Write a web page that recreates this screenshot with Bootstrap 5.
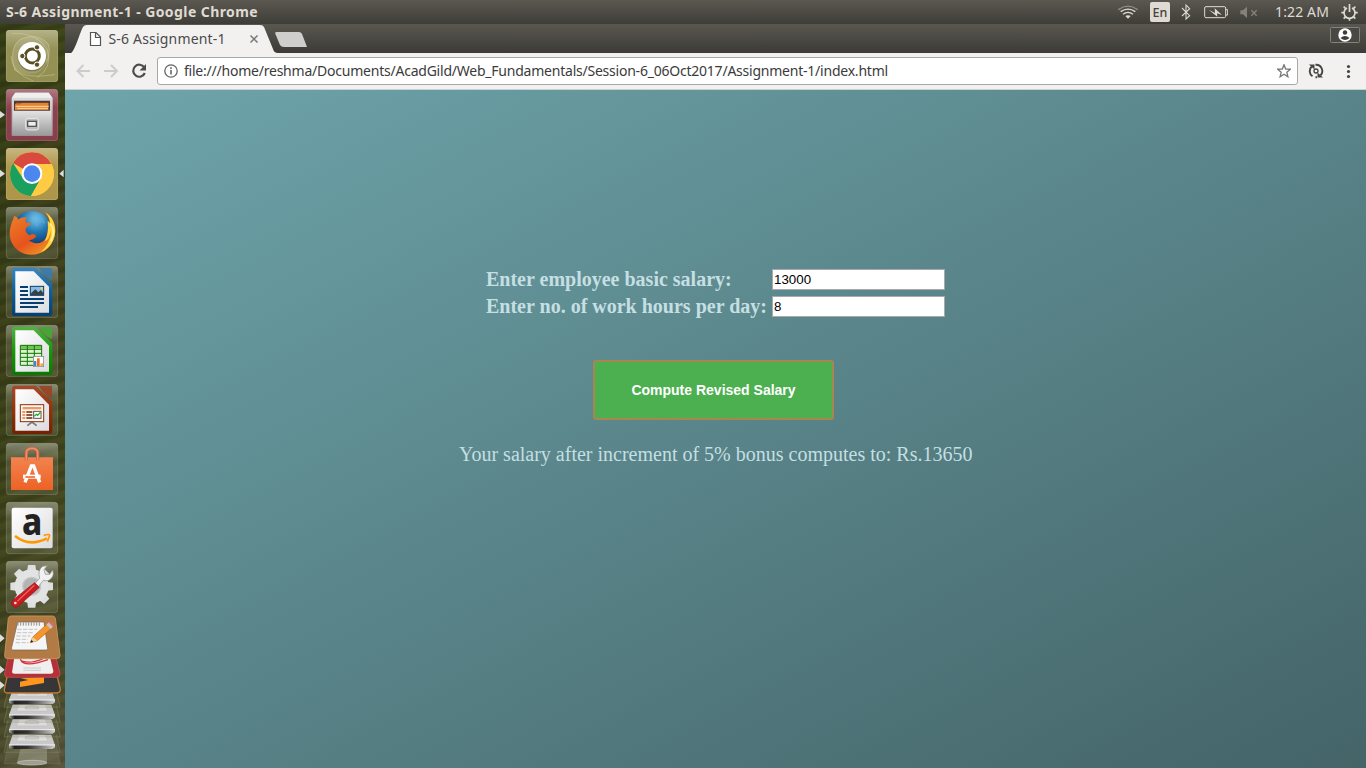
<!DOCTYPE html>
<html lang="en">
<head>
<meta charset="utf-8">
<title>S-6 Assignment-1</title>
<link href="https://cdn.jsdelivr.net/npm/bootstrap@5.3.0/dist/css/bootstrap.min.css" rel="stylesheet">
<style>
html, body { height: 768px; overflow: hidden; }
svg { display: block; flex: none; }
.desktop { width: 1366px; height: 768px; font-family: "Noto Sans", sans-serif; }
.top-panel { height: 24px; background: linear-gradient(#5b5851, #3f3d38); color: #dfdbd2; font-size: 14px; line-height: 24px; padding-left: 6px; }
.win-title { font-size: 14px; letter-spacing: .42px; }
.tray { padding-right: 8px; }
.lang { width: 20px; height: 20px; background: #dfdbd2; color: #45433e; font-size: 12.5px; font-weight: 500; line-height: 21px; border-radius: 2px; text-align: center; margin: 0 11px 0 12px; }
.clock { letter-spacing: .13px; margin: 0 12px 0 17px; }
.launcher { width: 65px; gap: 7px; padding-top: 6px; background: repeating-linear-gradient(163deg, #ffffa006 0 2px, #00000010 5px 8px, #ffffa008 11px 13px), radial-gradient(ellipse at 0 12%, #333b14 0, transparent 120px), linear-gradient(#414a18 0, #3e421b 12%, #453e20 28%, #4c4524 45%, #47481f 58%, #53502b 70%, #4e4c2e 85%, #625b49 100%); }
.tabstrip { height: 29px; background: linear-gradient(#5a5750, #3d3b37); }
.toolbar { height: 37px; background: #f2f1f0; border-bottom: 1px solid #c9d3d3; }
.omnibox { width: 1141px; height: 28px; border: 1px solid #a9a9a9; border-radius: 3px; background: #fff; margin-left: 10px; padding: 0 6px 0 6px; }
.url { font-size: 14px; color: #3b3b3b; margin-left: 6px; padding-bottom: 2px; letter-spacing: -.226px; white-space: nowrap; }
.page { background: linear-gradient(to bottom right, #6ea5ab, #446468); font-family: "Liberation Serif", serif; font-size: 20px; line-height: 23px; color: #c5dfe2; padding-top: 176px; }
.salary-form { width: 459px; margin-left: 421px; row-gap: 0; }
.salary-form label { width: 286px; height: 27px; line-height: 27px; font-weight: bold; white-space: nowrap; }
.salary-form input { width: 173px; height: 21px; border: 1px solid #a9a9a9; padding: 1px; font: 13.33px "Liberation Sans", sans-serif; color: #000; background: #fff; border-radius: 0; }
.compute { width: 241px; height: 60px; margin: 40px 0 0 528px; background: #4caf50; color: #fff; border: 2px solid #a88650; border-radius: 3px; font: bold 14px "Liberation Sans", sans-serif; }
.result { margin: 23px 0 0 394px; white-space: nowrap; }
</style>
</head>
<body>
<svg width="0" height="0" class="position-absolute" aria-hidden="true">
 <defs>
  <linearGradient id="gloss" x2="0" y2="1"><stop stop-color="#fff" stop-opacity=".38"/><stop offset=".35" stop-color="#fff" stop-opacity=".12"/><stop offset="1" stop-color="#fff" stop-opacity=".1"/></linearGradient>
  <linearGradient id="metal" x2="0" y2="1"><stop stop-color="#e4e4e4"/><stop offset="1" stop-color="#999"/></linearGradient>
  <linearGradient id="paper" x2="1" y2="1"><stop stop-color="#fff"/><stop offset="1" stop-color="#dcdce0"/></linearGradient>
  <linearGradient id="blueg" x2="0" y2="1"><stop stop-color="#3b86bd"/><stop offset=".5" stop-color="#0f5e98"/><stop offset="1" stop-color="#053f6f"/></linearGradient>
  <linearGradient id="greeng" x2="0" y2="1"><stop stop-color="#54b243"/><stop offset=".5" stop-color="#18970b"/><stop offset="1" stop-color="#087800"/></linearGradient>
  <linearGradient id="brown" x2="0" y2="1"><stop stop-color="#a34b2a"/><stop offset=".5" stop-color="#94320a"/><stop offset="1" stop-color="#722102"/></linearGradient>
  <linearGradient id="orange" x2="0" y2="1"><stop stop-color="#f2834f"/><stop offset="1" stop-color="#ed6225"/></linearGradient>
  <radialGradient id="globe" cx=".6" cy=".2" r=".75"><stop stop-color="#7cc7e8"/><stop offset=".45" stop-color="#2379b5"/><stop offset="1" stop-color="#082d62"/></radialGradient>
  <linearGradient id="fox" x1=".1" x2=".8" y2="1"><stop stop-color="#ef7e28"/><stop offset=".6" stop-color="#e5541d"/><stop offset="1" stop-color="#f29a2a"/></linearGradient>
  <linearGradient id="disk" x2="1" y2="0"><stop stop-color="#aaa"/><stop offset=".12" stop-color="#222"/><stop offset=".4" stop-color="#333"/><stop offset="1" stop-color="#ccc"/></linearGradient>
  <g id="tile"><rect x="19" y="1" width="154" height="154" rx="9" fill="url(#gloss)" stroke="#fff" stroke-opacity=".25" stroke-width="2"/></g>
  <g id="drive"><path d="M24 0 L12 53 H181 L169 0" fill="#8b8760" fill-opacity=".16" stroke="#9a9675" stroke-opacity=".5" stroke-width="2"/><path d="M38 0H154L165 31H27Z" fill="#c9c9c9"/><path d="M58 1H136L143 19H50Z" fill="#dedede" stroke="#b5b5b5"/><path d="M76 7q20-10 40 0v6H76z" fill="#d0d0d0" stroke="#999"/><path d="M27 31H165V38L158 43H35L27 39Z" fill="url(#disk)"/><path d="M27 31H165" stroke="#f5f5f5" stroke-width="3"/></g>
 </defs>
</svg>
<div class="desktop d-flex flex-column overflow-hidden">
 <header class="top-panel d-flex justify-content-between align-items-center">
  <strong class="win-title">S-6 Assignment-1 - Google Chrome</strong>
  <div class="tray d-flex align-items-center">
   <svg width="20" height="24" viewBox="54 0 60 72" fill="none" stroke-width="4"><path d="M55 29Q84 8 113 29" stroke="#918e86"/><path d="M62 35Q84 20 106 35M69 43Q84 31 99 43" stroke="#dfdbd2"/><path d="M76 48Q84 43 92 48L84 56Z" fill="#dfdbd2"/></svg>
   <div class="lang">En</div>
   <svg class="me-1" width="11" height="24" viewBox="243 0 33 72" fill="none" stroke="#dfdbd2" stroke-width="3.2"><path d="M246 24L269 47L258 57V15L269 26L246 48"/></svg>
   <svg class="ms-2" width="24" height="24" viewBox="312 0 72 72" fill="none" stroke="#dfdbd2" stroke-width="3"><rect x="314" y="20" width="63" height="33" rx="4"/><path d="M378 29h5v16h-5"/><path d="M326 29L345 39L344 25L366 45L351 40L352 50Z" fill="#dfdbd2" stroke="none"/></svg>
   <svg class="ms-2" width="22" height="24" viewBox="407 0 66 72" fill="#85827b"><path d="M420 31h8l12-11v34l-12-11h-8z"/><path d="M453 31l16 16m0-16l-16 16" stroke="#85827b" stroke-width="4"/></svg>
   <span class="clock">1:22 AM</span>
   <svg width="17" height="24" viewBox="724 0 51 72" fill="none" stroke="#dfdbd2" stroke-width="5"><path d="M742 24A16.500 16.500 0 1 0 757 24"/><path d="M749.5 12V36"/><path d="M725 38h8m33 0h8M732 20l6 6m29-6l-6 6M732 56l6-6m29 6l-6-6M749.500 54v8"/></svg>
  </div>
 </header>
 <div class="d-flex flex-grow-1">
  <nav class="launcher d-flex flex-column flex-shrink-0" aria-label="Launcher">
   <svg width="65" height="52" viewBox="0 0 195 156"><rect x="18" width="156" height="156" rx="9" fill="#878340"/><use href="#tile"/><g fill="none" stroke="#dedaa8" stroke-opacity=".6" stroke-width="2"><path d="M44 120Q25 55 60 28Q112 5 145 42M35 10Q110 5 142 59Q158 113 112 143M145 42Q153 70 139 98M44 120Q75 148 165 134M33 78Q36 130 100 153"/></g><path d="M44 120Q25 55 60 28Q112 5 145 42Q153 70 139 98Q125 132 90 132Q62 132 44 120Z" fill="#fff" opacity=".13"/><circle cx="96" cy="81" r="43" fill="#5a5430" opacity=".5"/><circle cx="96" cy="78" r="42" fill="#fff"/><circle cx="97" cy="78" r="21" fill="none" stroke="#575022" stroke-width="9"/><g fill="#575022" stroke="#fff" stroke-width="3"><circle cx="67" cy="78" r="8"/><circle cx="111" cy="52" r="8"/><circle cx="111" cy="104" r="8"/></g></svg>
   <svg width="65" height="52" viewBox="0 195 195 156"><rect x="18" y="195" width="156" height="156" rx="9" fill="#7c2937"/><use href="#tile" y="195"/><path d="M0 261L15 272L0 283Z" fill="#ddd"/><path d="M46 206H146L158 222V335H35V222Z" fill="url(#metal)"/><path d="M46 206H146L156 221H36Z" fill="#efefef"/><path d="M42 230H150V262H42Z" fill="#4a3a35"/><path d="M47 236H145V258H47Z" fill="#ba632b"/><path d="M45 241h16l4-4h80v21H45z" fill="#e58330"/><path d="M47 247H146M52 253H144" stroke="#fbdca9" stroke-width="3"/><path d="M39 260H153L155 335H38Z" fill="url(#metal)"/><rect x="77" y="283" width="39" height="35" rx="7" fill="#bcbcbc" stroke="#e8e8e8" stroke-width="3"/><rect x="83" y="292" width="26" height="15" fill="#eee" stroke="#555" stroke-width="4"/></svg>
   <svg width="65" height="52" viewBox="0 12 195 156"><rect x="18" y="12" width="156" height="156" rx="9" fill="#a58a35"/><use href="#tile" y="12"/><path d="M0 77L15 89L0 100ZM191 77L178 89L191 100Z" fill="#ddd"/><circle cx="96" cy="90" r="66" fill="#ffcb42"/><path d="M96 90L39 57A66 66 0 0 1 154 60H96Z" fill="#d9493d"/><path d="M96 90L70 105L39 57A66 66 0 0 0 93 156L122 105Z" fill="#1b9f5e"/><path d="M96 60H154A66 66 0 0 1 93 156L122 105Z" fill="#ffcb42"/><circle cx="96" cy="89" r="31" fill="#fff"/><circle cx="96" cy="89" r="25" fill="#4b87ee"/></svg>
   <svg width="65" height="52" viewBox="0 189 195 156"><use href="#tile" y="189"/><circle cx="96" cy="259" r="58" fill="url(#globe)"/><path d="M105 210q29 8 31 29l-17-4-8 14-13-15z" fill="#5aafe0" opacity=".5"/><path d="M42 217C49 215 53 222 55 227C63 220 72 219 82 221C75 227 75 232 79 236L94 237C91 246 78 247 77 256C75 263 83 272 90 274C98 266 104 271 109 275C104 285 94 288 86 288C100 302 128 301 138 281C145 264 143 245 143 230L150 237C153 227 142 213 136 205C162 220 174 256 160 287C146 323 108 340 73 329C39 317 25 285 30 256C32 239 40 229 42 217Z" fill="url(#fox)"/><path d="M136 205C162 220 174 256 160 287Q150 313 122 325Q151 299 153 261L146 282Q140 292 134 292Q148 266 143 230L150 237Q148 219 136 205Z" fill="#ffd33b"/><path d="M151 239Q168 260 153 292" fill="none" stroke="#fff1a1" stroke-width="5"/></svg>
   <svg width="65" height="52" viewBox="0 12 195 156"><use href="#tile" y="12"/><path d="M45 17H107L157 66V154Q157 162 148 162H44Q36 162 36 154V26Q36 17 45 17Z" fill="url(#blueg)"/><path d="M46 28H101L147 74V152H46Z" fill="url(#paper)"/><path d="M117 18H156V55Q130 43 117 18Z" fill="#347db1" opacity=".85"/><g stroke="#063e70" stroke-width="6"><path d="M60 75H84M60 87H84M60 99H84M60 111H132M60 123H132M60 135H114"/></g><rect x="91" y="73" width="40" height="27" fill="#85bce8" stroke="#063e70" stroke-width="3"/><path d="M93 94L106 82L115 91L122 84L130 93V99H93Z" fill="#374044"/><circle cx="125" cy="79" r="4" fill="#f5d13f"/></svg>
   <svg width="65" height="52" viewBox="0 189 195 156"><use href="#tile" y="189"/><path d="M45 194H107L157 243V331Q157 339 148 339H44Q36 339 36 331V203Q36 194 45 194Z" fill="url(#greeng)"/><path d="M46 205H101L147 251V329H46Z" fill="url(#paper)"/><path d="M117 195H156V232Q130 220 117 195Z" fill="#45a832" opacity=".9"/><path d="M61 250H125V310H61Z" fill="#d8f5cc"/><path d="M61 250H125V260H61Z" fill="#74c252"/><path d="M61 250H125V310H61ZM61 262H125M61 274H125M61 286H125M61 298H125M82 250V310M103 250V310" fill="none" stroke="#147408" stroke-width="3"/><rect x="100" y="283" width="31" height="31" fill="#fff" stroke="#77788a" stroke-width="2"/><path d="M102 297h7v15h-7z" fill="#3e86c9"/><path d="M111 289h8v23h-8z" fill="#e96b20"/><path d="M121 304h8v8h-8z" fill="#edb22e"/></svg>
   <svg width="65" height="52" viewBox="0 12 195 156"><use href="#tile" y="12"/><path d="M45 17H107L157 66V154Q157 162 148 162H44Q36 162 36 154V26Q36 17 45 17Z" fill="url(#brown)"/><path d="M46 28H101L147 74V152H46Z" fill="url(#paper)"/><path d="M117 18H156V55Q130 43 117 18Z" fill="#9a4224" opacity=".9"/><path d="M82 137L96 126L110 137M96 124V129" fill="none" stroke="#777" stroke-width="5"/><rect x="61" y="74" width="70" height="51" fill="#fff5ef" stroke="#8c2f0b" stroke-width="3"/><path d="M68 81H124V88H68Z" fill="#e99a66"/><path d="M67 96h9M67 105h9M67 114h9" stroke="#e47739" stroke-width="5"/><path d="M79 96h18M79 105h18M79 114h18" stroke="#702306" stroke-width="5"/><rect x="101" y="94" width="22" height="21" fill="#fff" stroke="#555" stroke-width="3"/><path d="M103 109l6-6 4 3 8-9" fill="none" stroke="#22aa28" stroke-width="4"/></svg>
   <svg width="65" height="52" viewBox="0 189 195 156"><use href="#tile" y="189"/><path d="M33 232H159V330H33Z" fill="url(#orange)"/><path d="M79 241V219Q79 205 96 205T113 219V241" fill="none" stroke="#c9603e" stroke-width="10"/><path d="M79 241V219Q79 205 96 205T113 219V241" fill="none" stroke="#ee8f6b" stroke-width="5"/><path d="M75 307L94 258H101L119 307" fill="none" stroke="#fff" stroke-width="10"/><path d="M69 290H122" stroke="#fff" stroke-width="12"/><path d="M76 291H105" stroke="#ec6c35" stroke-width="5"/></svg>
   <svg class="overflow-visible" width="65" height="52" viewBox="0 12 195 156"><use href="#tile" y="12"/><rect x="35" y="29" width="123" height="122" rx="6" fill="url(#paper)"/><text transform="translate(96 110) scale(.88 1)" text-anchor="middle" font-family="Noto Sans, sans-serif" font-weight="800" font-size="113" fill="#222">a</text><path d="M45 114Q88 148 141 121" fill="none" stroke="#ff9900" stroke-width="8"/><path d="M131 112Q153 106 148 115L142 131" fill="none" stroke="#ff9900" stroke-width="5"/></svg>
   <svg width="65" height="52" viewBox="0 189 195 156"><use href="#tile" y="189"/><g transform="translate(95 265)"><g fill="#dedfdf"><path id="tooth" d="M-11-64H11L14-42H-14Z"/><use href="#tooth" transform="rotate(45)"/><use href="#tooth" transform="rotate(90)"/><use href="#tooth" transform="rotate(135)"/><use href="#tooth" transform="rotate(180)"/><use href="#tooth" transform="rotate(225)"/><use href="#tooth" transform="rotate(270)"/><use href="#tooth" transform="rotate(315)"/></g><circle r="40" fill="#c5c7c7" stroke="#e2e3e3" stroke-width="22"/><circle r="25" fill="#b3b5b4"/></g><path d="M92 270L119 241Q112 216 128 205L142 203L132 215L136 229L149 229L158 216Q165 235 147 247Q138 250 130 247L103 281Z" fill="#f1f1f1" stroke="#8c8c8c" stroke-width="2"/><path d="M104 254L118 268L53 326Q43 331 36 322Q31 313 40 305Z" fill="#c91c21" stroke="#981116" stroke-width="2"/><path d="M103 262L52 310" stroke="#ed6662" stroke-width="4"/><circle cx="46" cy="315" r="4" fill="#f3dada"/></svg>
   <svg width="65" height="155" viewBox="0 27 195 465" style="margin-top:-7px">
    <g transform="translate(0 18)"><path d="M62 415H141V461H50Z" fill="#aeb0a2" opacity=".45"/><ellipse cx="96" cy="458" rx="44" ry="7" fill="#9c9d94" stroke="#d0d0c7" stroke-width="2"/><path d="M24 403L12 462H181L169 403" fill="#aaa78b" fill-opacity=".18" stroke="#a9a68d" stroke-opacity=".5"/>
    <use href="#drive" y="374"/><use href="#drive" y="328"/><use href="#drive" y="284"/><use href="#drive" y="239"/>
    <path d="M24 188H169L181 238Q181 249 170 249H22Q12 249 13 238Z" fill="#373536" stroke="#bf7c32" stroke-width="4"/><path d="M62 205L132 202V219L60 231V215L85 210Z" fill="#ff961e"/>
    <path d="M24 142H168L180 190Q181 202 170 202H23Q12 202 14 190Z" fill="#b53139" stroke="#cf575d" stroke-width="2"/><path d="M43 142H150L160 183Q160 191 152 191H42Q34 191 37 181Z" fill="#efefef"/><path d="M66 153Q90 162 128 147M61 148Q71 175 144 149" fill="none" stroke="#d72f39" stroke-width="4"/><path d="M70 174H123M70 181H123" stroke="#bbb" stroke-width="2"/>
    <path d="M33 18H157Q164 18 166 25L180 136Q181 146 170 146H23Q13 146 14 136L25 25Q27 18 33 18Z" fill="#b27b45" stroke="#c29255" stroke-width="3"/><path d="M53 36H132L143 116Q144 120 137 120H39Q32 120 35 112Z" fill="#f5f5f5" stroke="#6f624e" stroke-width="2"/><path d="M54 37v10m8-10v10m8-10v10m8-10v10m8-10v10m8-10v10m8-10v10m8-10v10m8-10v10" stroke="#8d8d8d" stroke-width="3"/><path d="M52 58H112M51 68H101M49 78H91M48 88H83M47 98H85" stroke="#aaa" stroke-width="2" stroke-dasharray="13 4"/><path d="M91 98L98 81L146 38L158 52L112 92Z" fill="#f5952c" stroke="#b76519" stroke-width="2"/><path d="M91 98L98 81L112 92Z" fill="#eed19e"/><path d="M91 98l3-8 6 5z" fill="#222"/><path d="M139 44L146 37L159 50L152 57Z" fill="#c7c7ca"/><path d="M146 37Q157 34 162 43L159 50Z" fill="#e76a66"/><path d="M0 73L14 85L0 97ZM0 167L14 179L0 191ZM0 214L14 226L0 238Z" fill="#ddd"/></g>
   </svg>
  </nav>
  <main class="d-flex flex-column flex-grow-1">
   <div class="tabstrip d-flex justify-content-between">
    <svg width="245" height="29" viewBox="0 0 245 29"><path d="M6 29C10 27 15 8 18 3Q19 1 22 1H195Q198 1 199 3L208 25Q209 29 213 29Z" fill="#f2f1f0"/><path d="M25.500 8.500H31L35.500 13V21.500H25.500ZM30.500 8.500V13.500H35.500" fill="#fff" stroke="#555" stroke-width="1.2"/><text x="43.500" y="20" font-family="Noto Sans, sans-serif" font-size="14" fill="#4a4a4a" textLength="117">S-6 Assignment-1</text><path d="M185.500 11.500l7 7m0-7l-7 7" stroke="#777" stroke-width="1.500"/><path d="M211 8H234Q236 8 237 10L242 23H219Q216 23 215 21L210 9Z" fill="#d0cecd"/></svg>
    <svg width="37" height="29" viewBox="0 0 37 29"><rect x="1.500" y="3.500" width="29" height="15" rx="1" fill="#4a4843" stroke="#85827c"/><circle cx="16" cy="11" r="6.700" fill="#fff"/><circle cx="16" cy="8.500" r="2.200" fill="#3e3c38"/><path d="M11.500 14Q16 10 20.500 14Q16 18 11.500 14Z" fill="#3e3c38"/></svg>
   </div>
   <div class="toolbar d-flex align-items-center">
    <svg width="82" height="36" viewBox="0 0 82 36" fill="none" stroke-width="2"><path d="M25 18H12.500M18.500 12L12.500 18L18.500 24M39 18H52M46 12L52 18L46 24" stroke="#ccc"/><path d="M79.300 14.500A6 6 0 1 0 79.800 20" stroke="#4c4c4c" stroke-width="2.200"/><path d="M81 11v6.500h-6.500z" fill="#4c4c4c"/></svg>
    <div class="omnibox d-flex align-items-center">
     <svg width="14" height="14" viewBox="0 0 14 14"><circle cx="7" cy="7" r="6.200" fill="none" stroke="#666" stroke-width="1.300"/><path d="M7 6v4.500M7 3.300v1.600" stroke="#666" stroke-width="1.600"/></svg>
     <span class="url">file:///home/reshma/Documents/AcadGild/Web_Fundamentals/Session-6_06Oct2017/Assignment-1/index.html</span>
     <svg class="ms-auto" width="14" height="14" viewBox="0 0 14 14"><path d="M7 .8L8.700 5L13.300 5.200L9.800 8.200L10.900 12.800L7 10.300L3.100 12.800L4.200 8.200L.7 5.200L5.300 5Z" fill="none" stroke="#777" stroke-width="1.300"/></svg>
    </div>
    <svg width="68" height="36" viewBox="0 0 68 36"><path d="M14.500 23.300A6.200 6.200 0 0 1 14 13.300M17.500 11.800A6.200 6.200 0 0 1 22.500 22.300M17.500 24.200H19" fill="none" stroke="#444" stroke-width="1.900"/><path d="M11 11.500h5.500v5zM25 24.500h-5.500v-5z" fill="#444"/><circle cx="18" cy="18" r="2" fill="none" stroke="#444" stroke-width="1.300"/><g fill="#444"><circle cx="50.500" cy="13.500" r="1.600"/><circle cx="50.500" cy="18.500" r="1.600"/><circle cx="50.500" cy="23.500" r="1.600"/></g></svg>
   </div>
   <section class="page flex-grow-1">
    <form class="salary-form d-flex flex-wrap align-items-center">
     <label for="salary">Enter employee basic salary:</label><input id="salary" value="13000">
     <label for="hours">Enter no. of work hours per day:</label><input id="hours" value="8">
    </form>
    <button class="compute d-block" type="button">Compute Revised Salary</button>
    <p class="result">Your salary after increment of 5% bonus computes to: Rs.13650</p>
   </section>
  </main>
 </div>
</div>
<script src="https://cdn.jsdelivr.net/npm/bootstrap@5.3.0/dist/js/bootstrap.bundle.min.js"></script>
</body>
</html>
